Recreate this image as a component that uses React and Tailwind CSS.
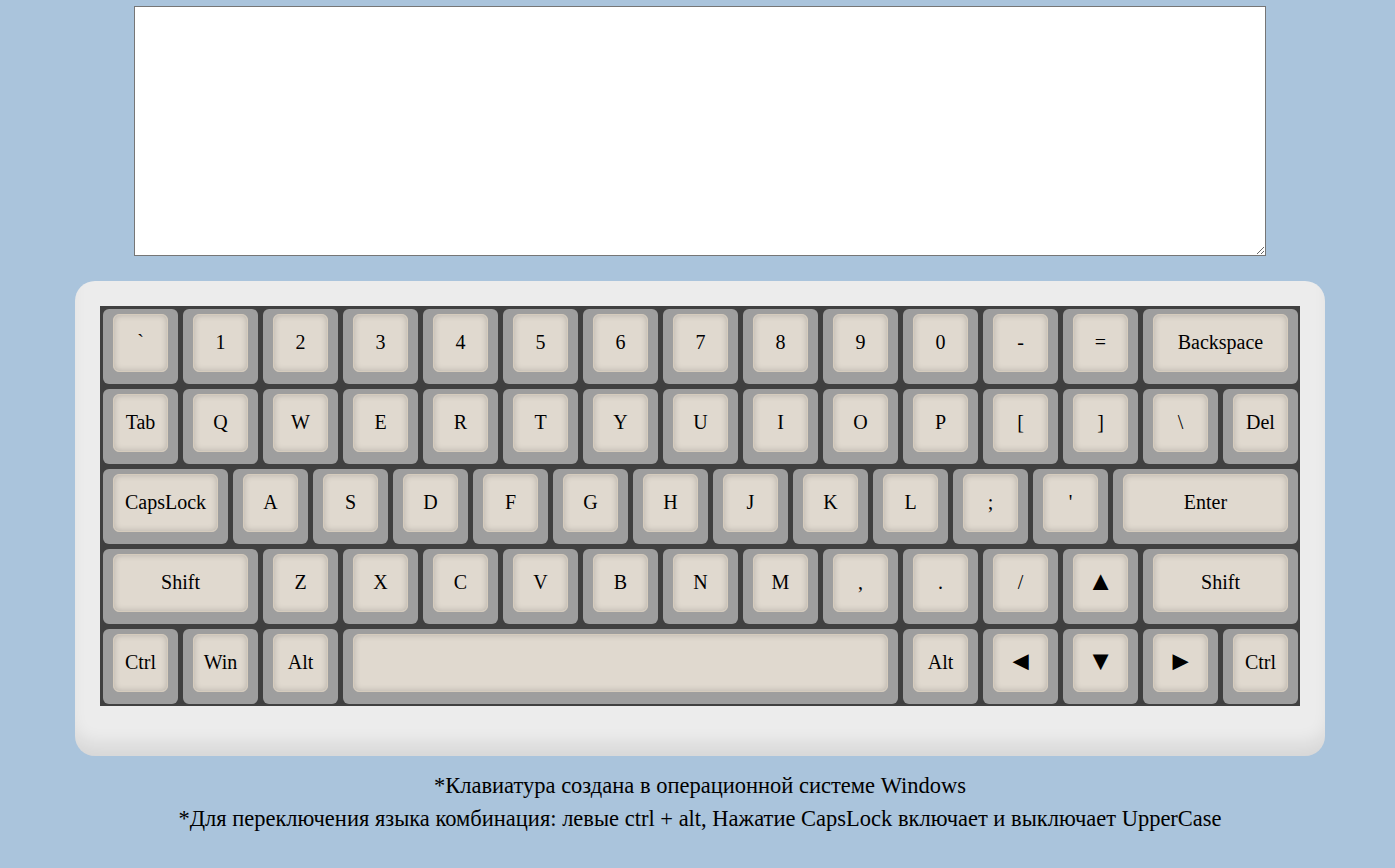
import React from 'react';

const arrows = ['▲', '◄', '▼', '►'];

const rows = [
  [['`'], ['1'], ['2'], ['3'], ['4'], ['5'], ['6'], ['7'], ['8'], ['9'], ['0'], ['-'], ['='], ['Backspace', 'w-[160px]']],
  [['Tab'], ['Q'], ['W'], ['E'], ['R'], ['T'], ['Y'], ['U'], ['I'], ['O'], ['P'], ['['], [']'], ['\\'], ['Del']],
  [['CapsLock', 'w-[130px]'], ['A'], ['S'], ['D'], ['F'], ['G'], ['H'], ['J'], ['K'], ['L'], [';'], ["'"], ['Enter', 'w-[190px]']],
  [['Shift', 'w-[160px]'], ['Z'], ['X'], ['C'], ['V'], ['B'], ['N'], ['M'], [','], ['.'], ['/'], ['▲'], ['Shift', 'w-[160px]']],
  [['Ctrl'], ['Win'], ['Alt'], ['', 'w-[560px]'], ['Alt'], ['◄'], ['▼'], ['►'], ['Ctrl']],
];

function Key({ label, width }) {
  const isArrow = arrows.includes(label);
  return (
    <div className={`${width || 'w-[80px]'} h-[80px] pl-[3px] pr-[2px] py-[2.5px]`}>
      <div className="h-full w-full rounded-[6px] bg-[#9e9e9e] pl-[10px] pr-[10px] pt-[5px] pb-[12px]">
        <div className="flex h-full w-full items-center justify-center rounded-[6px] border border-[#d6ccbd] bg-[#e0d9cf] pb-[2px] text-black shadow-[inset_0_0_6px_rgba(0,0,0,0.2)]">
          <span className={isArrow ? 'text-[27px] leading-none' : 'text-[20px] leading-none'}>{label}</span>
        </div>
      </div>
    </div>
  );
}

export default function App() {
  return (
    <div
      className="min-h-[868px] bg-[#aac4dc] pl-[5px] pt-[6px]"
      style={{ fontFamily: '"Liberation Serif", "Times New Roman", serif' }}
    >
      <div className="flex flex-col items-center">
        <textarea className="block h-[250px] w-[1132px] resize border border-[#767676] bg-white" />

        <div className="mt-[25px] rounded-[20px] bg-[#ececec] px-[25px] pt-[25px] pb-[50px] shadow-[inset_0_-18px_18px_-6px_rgba(0,0,0,0.09)]">
          <div className="flex w-[1200px] flex-col bg-[#404040]">
            {rows.map((row, i) => (
              <div key={i} className="flex">
                {row.map(([label, width], j) => (
                  <Key key={j} label={label} width={width} />
                ))}
              </div>
            ))}
          </div>
        </div>

        <p className="mt-[17px] text-[22.5px] leading-[26px] text-black">
          *Клавиатура создана в операционной системе Windows
        </p>
        <p className="mt-[7px] text-[22.5px] leading-[26px] text-black">
          *Для переключения языка комбинация: левые ctrl + alt, Нажатие CapsLock включает и выключает UpperCase
        </p>
      </div>
    </div>
  );
}
